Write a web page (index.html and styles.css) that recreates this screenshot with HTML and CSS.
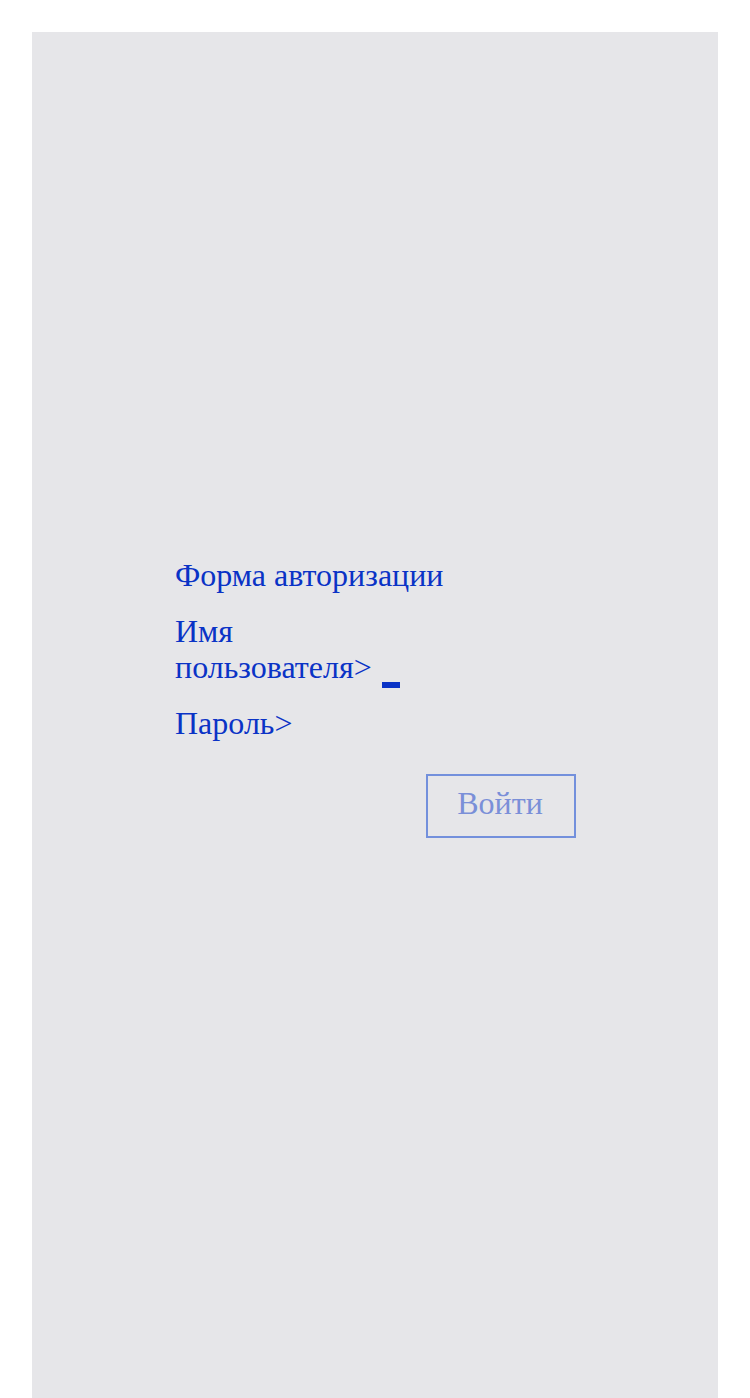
FILE: index.html
```html
<!DOCTYPE html>
<html lang="ru">
<head>
<meta charset="utf-8">
<title>Форма авторизации</title>
<link rel="stylesheet" href="styles.css">
</head>
<body>
<main class="panel">
  <form class="login">
    <h1 class="title">Форма авторизации</h1>
    <div class="row">
      <label class="label">Имя пользователя&gt;</label>
      <span class="caret"></span>
    </div>
    <div class="row">
      <label class="label">Пароль&gt;</label>
    </div>
    <div class="actions">
      <button type="button" class="btn">Войти</button>
    </div>
  </form>
</main>
</body>
</html>
```
FILE: styles.css
```css
html, body {
  margin: 0;
  padding: 0;
  background: #ffffff;
}
body {
  padding: 32px 32px 0 32px;
  font-family: "Liberation Serif", "Times New Roman", serif;
}
.panel {
  background: #e6e6e9;
  height: 1366px;
  display: flex;
  justify-content: center;
  align-items: center;
}
.login {
  width: 400px;
  color: #0a33c6;
  font-size: 32px;
  line-height: 36px;
  display: flex;
  flex-direction: column;
  margin-top: -35px;
}
.title {
  font-size: 32px;
  font-weight: normal;
  margin: 0 0 20px 0;
  line-height: 36px;
}
.row {
  display: flex;
  align-items: flex-end;
  margin-bottom: 20px;
}
.label {
  width: 200px;
}
.caret {
  display: inline-block;
  width: 18px;
  height: 6px;
  background: #0a33c6;
  margin-left: 7px;
  margin-bottom: -3px;
}
.actions {
  display: flex;
  justify-content: flex-end;
  margin-top: 13px;
  margin-right: -1px;
}
.btn {
  width: 150px;
  height: 64px;
  border: 2px solid #7390dc;
  background: transparent;
  color: #7a8fd8;
  font-family: "Liberation Serif", "Times New Roman", serif;
  font-size: 32px;
  line-height: 36px;
  padding: 0 2px 6px 0;
}
```
